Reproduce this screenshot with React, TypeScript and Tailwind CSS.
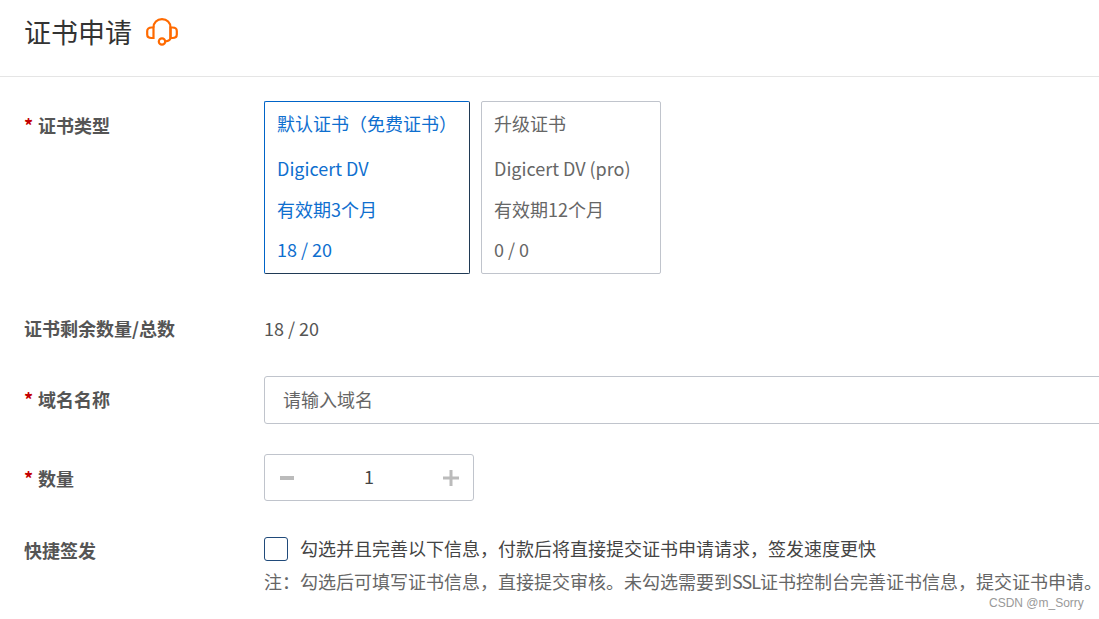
function Req() {
  return <span className="text-[#c40000] mr-[5px] w-[9px] inline-block">*</span>;
}
export default function App() {
  return (
    <div className="relative w-[1099px] h-[619px] overflow-hidden bg-white text-[18px] text-[#555] font-['Noto_Sans_CJK_SC',sans-serif]">
      <div className="flex items-center h-[77px] pl-6 pb-[13px] border-b border-[#e5e5e5]">
        <h1 className="text-[27px] leading-[36px] text-[#333] font-normal">证书申请</h1>
        <svg className="ml-[14px]" width="32" height="28" viewBox="0 0 32 28" fill="none" stroke="#ff6a00" strokeWidth="2.2">
          <path d="M7.5 9.5C7.5 4.5 11 1.2 16 1.2S24.5 4.5 24.5 9.5V20C24.5 22 22 23 19 23.5" />
          <path d="M7.5 9.5H5.5C2.8 9.5 1.2 11 1.2 13V16.5C1.2 18.5 2.8 20 5.5 20H7.5Z" />
          <path d="M24.5 9.5H26.5C29.2 9.5 30.8 11 30.8 13V16.5C30.8 18.5 29.2 20 26.5 20H24.5Z" />
          <circle cx="16" cy="23.5" r="3.2" />
        </svg>
      </div>
      <div className="flex flex-col pl-6 pt-6">
        <div className="flex">
          <div className="w-[240px] shrink-0 font-bold pt-[11px] leading-[27px]"><Req />证书类型</div>
          <div className="flex gap-[11px]">
            <div className="w-[206px] h-[173px] rounded-[2px] border border-[#0064c8] border-r-[#203a55] border-b-[#203a55] text-[#0f6fcf] pl-3 pt-[8px]">
              <div className="leading-[26px]">默认证书（免费证书）</div>
              <div className="leading-[26px] mt-[19px]">Digicert DV</div>
              <div className="leading-[26px] mt-[15px]">有效期3个月</div>
              <div className="leading-[26px] mt-[14px]">18 / 20</div>
            </div>
            <div className="w-[180px] h-[173px] rounded-[2px] border border-[#c0c4cc] pl-3 pt-[8px] text-[#666]">
              <div className="leading-[26px]">升级证书</div>
              <div className="leading-[26px] mt-[19px]">Digicert DV (pro)</div>
              <div className="leading-[26px] mt-[15px]">有效期12个月</div>
              <div className="leading-[26px] mt-[14px]">0 / 0</div>
            </div>
          </div>
        </div>
        <div className="flex mt-[41px] leading-[26px]">
          <div className="w-[240px] shrink-0 font-bold">证书剩余数量/总数</div>
          <div>18 / 20</div>
        </div>
        <div className="flex mt-[35px]">
          <div className="w-[240px] shrink-0 font-bold leading-[46px]"><Req />域名名称</div>
          <div className="w-[900px] shrink-0 h-[48px] rounded-[3px] border border-[#c0c4cc] pl-[18px] leading-[44px] text-[#666]">请输入域名</div>
        </div>
        <div className="flex mt-[30px]">
          <div className="w-[240px] shrink-0 font-bold leading-[48px]"><Req />数量</div>
          <div className="flex items-center justify-between w-[210px] h-[47px] rounded-[3px] border border-[#c0c4cc] pl-[15px] pr-[13px] text-[#444]">
            <span className="w-[14px] h-[4px] bg-[#bbb]"></span>
            <span className="mb-[2px] ml-[2px]">1</span>
            <svg width="18" height="18" viewBox="0 0 18 18"><path d="M7.5 1h3v6.5H17v3h-6.5V17h-3v-6.5H1v-3h6.5Z" fill="#bbb" /></svg>
          </div>
        </div>
        <div className="flex mt-[35px]">
          <div className="w-[240px] shrink-0 font-bold leading-[26px]">快捷签发</div>
          <div className="flex flex-col">
            <div className="flex items-start leading-[22px] text-[#444]">
              <span className="w-6 h-6 shrink-0 rounded-[3px] border border-[#204a7a] mr-3"></span>
              <span>勾选并且完善以下信息，付款后将直接提交证书申请请求，签发速度更快</span>
            </div>
            <div className="mt-[7px] leading-[26px] whitespace-nowrap text-[#666]">注：勾选后可填写证书信息，直接提交审核。未勾选需要到<span className="tracking-[-1px]">SSL</span>证书控制台完善证书信息，提交证书申请<span className="[font-feature-settings:'halt']">。</span></div>
          </div>
        </div>
      </div>
      <div className="absolute left-[989px] top-[596px] text-[12px] leading-[14px] text-[#999] font-['Liberation_Sans',sans-serif]">CSDN @m_Sorry</div>
    </div>
  );
}
